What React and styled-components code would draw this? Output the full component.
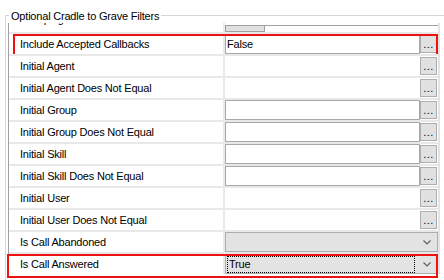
import React from 'react'
import styled, { createGlobalStyle } from 'styled-components'

const Global = createGlobalStyle`
body {
  margin: 0;
  background: #fff;
  overflow: hidden;
  font-family: 'Liberation Sans', Arial, sans-serif;
  font-size: 11px;
  letter-spacing: -0.2px;
  color: #000;
}
`

const Group = styled.section`
margin: 15px 0 0 5px;
border-top: 1px solid #d5d5d5;
border-left: 1px solid #d5d5d5;
height: 265px;
box-sizing: border-box;
`
const Caption = styled.div`
display: table;
margin: -6px 0 0 3px;
padding: 0 2px;
background: #fff;
line-height: 13px;
`
const Grid = styled.div`
margin-left: 2px;
width: 432px;
box-sizing: border-box;
border-left: 1px solid #a0a0a0;
border-right: 2px solid #e3e3e3;
`
const Clip = styled.div`
height: 9px;
overflow: hidden;
`
const Row = styled.div`
position: relative;
display: grid;
grid-template-columns: 216px 213px;
border-top: 2px solid #e8e8e8;
height: 20px;
margin-top: ${p => p.$shift || 0}px;
`
const Label = styled.div`
border-right: 2px solid #e8e8e8;
padding-left: 11px;
line-height: 20px;
white-space: nowrap;
`
const Value = styled.div`
display: flex;
align-items: center;
padding-right: ${p => p.$pad ? 1 : 0}px;
`
const TextBox = styled.div`
flex: 1;
height: 20px;
box-sizing: border-box;
border: 1px solid #a9a9a9;
padding-left: 1px;
line-height: 18px;
`
const DotButton = styled.div`
width: 17px;
height: 18px;
box-sizing: border-box;
background: #e1e1e1;
border: 1px solid #adadad;
text-align: center;
line-height: 16px;
letter-spacing: 0.5px;
`
const Combo = styled.div`
flex: 1;
height: 20px;
box-sizing: border-box;
display: flex;
align-items: center;
background: #e3e3e3;
border: 1px solid #adadad;
padding: 0 6px 0 1px;
`
const Focus = styled.div`
flex: 1;
height: 15px;
margin-right: 8px;
border: 1px dotted #000;
line-height: 14px;
padding-left: 1px;
`
const Spacer = styled.div`
flex: 1;
`
const Chip = styled.div`
flex: 1;
align-self: flex-start;
margin-top: 16px;
border-top: 1px solid #a0a0a0;
height: 8px;
`
const ChipBox = styled.div`
width: 40px;
height: 6px;
box-sizing: border-box;
background: #e0e0e0;
border: 1px solid #a0a0a0;
border-top: none;
`
const Highlight = styled.div`
position: absolute;
left: ${p => p.$left}px;
top: 0;
width: ${p => p.$w}px;
height: ${p => p.$h}px;
box-sizing: border-box;
border: 2px solid #ee1111;
pointer-events: none;
`

const Chevron = () => (
  <svg width="8" height="5" viewBox="0 0 8 5" style={{ marginLeft: 'auto' }}>
    <path d="M0.5 0.5 L4 4 L7.5 0.5" fill="none" stroke="#606060" strokeWidth="1.2" />
  </svg>
)

const rows = [
  { label: 'Include Accepted Callbacks', kind: 'text', text: 'False', mark: { left: 4, w: 425, h: 22 } },
  { label: 'Initial Agent', kind: 'bare' },
  { label: 'Initial Agent Does Not Equal', kind: 'bare' },
  { label: 'Initial Group', kind: 'text' },
  { label: 'Initial Group Does Not Equal', kind: 'text' },
  { label: 'Initial Skill', kind: 'text' },
  { label: 'Initial Skill Does Not Equal', kind: 'text' },
  { label: 'Initial User', kind: 'bare' },
  { label: 'Initial User Does Not Equal', kind: 'bare' },
  { label: 'Is Call Abandoned', kind: 'combo' },
  { label: 'Is Call Answered', kind: 'combo', text: 'True', mark: { left: -2, w: 431, h: 24 } },
]

function Field({ row }) {
  if (row.kind === 'combo') {
    return (
      <Value>
        <Combo>
          {row.text ? <Focus>{row.text}</Focus> : null}
          <Chevron />
        </Combo>
      </Value>
    )
  }
  return (
    <Value $pad>
      {row.kind === 'bare' ? <Spacer /> : <TextBox>{row.text}</TextBox>}
      <DotButton>...</DotButton>
    </Value>
  )
}

export default function App() {
  return (
    <>
      <Global />
      <Group>
        <Caption>Optional Cradle to Grave Filters</Caption>
        <Grid>
          <Clip>
            <Row $shift={-16}>
              <Label>Grouping Level</Label>
              <Value>
                <Chip><ChipBox /></Chip>
              </Value>
            </Row>
          </Clip>
          {rows.map((row) => (
            <Row key={row.label}>
              <Label>{row.label}</Label>
              <Field row={row} />
              {row.mark ? <Highlight $left={row.mark.left} $w={row.mark.w} $h={row.mark.h} /> : null}
            </Row>
          ))}
        </Grid>
      </Group>
    </>
  )
}
